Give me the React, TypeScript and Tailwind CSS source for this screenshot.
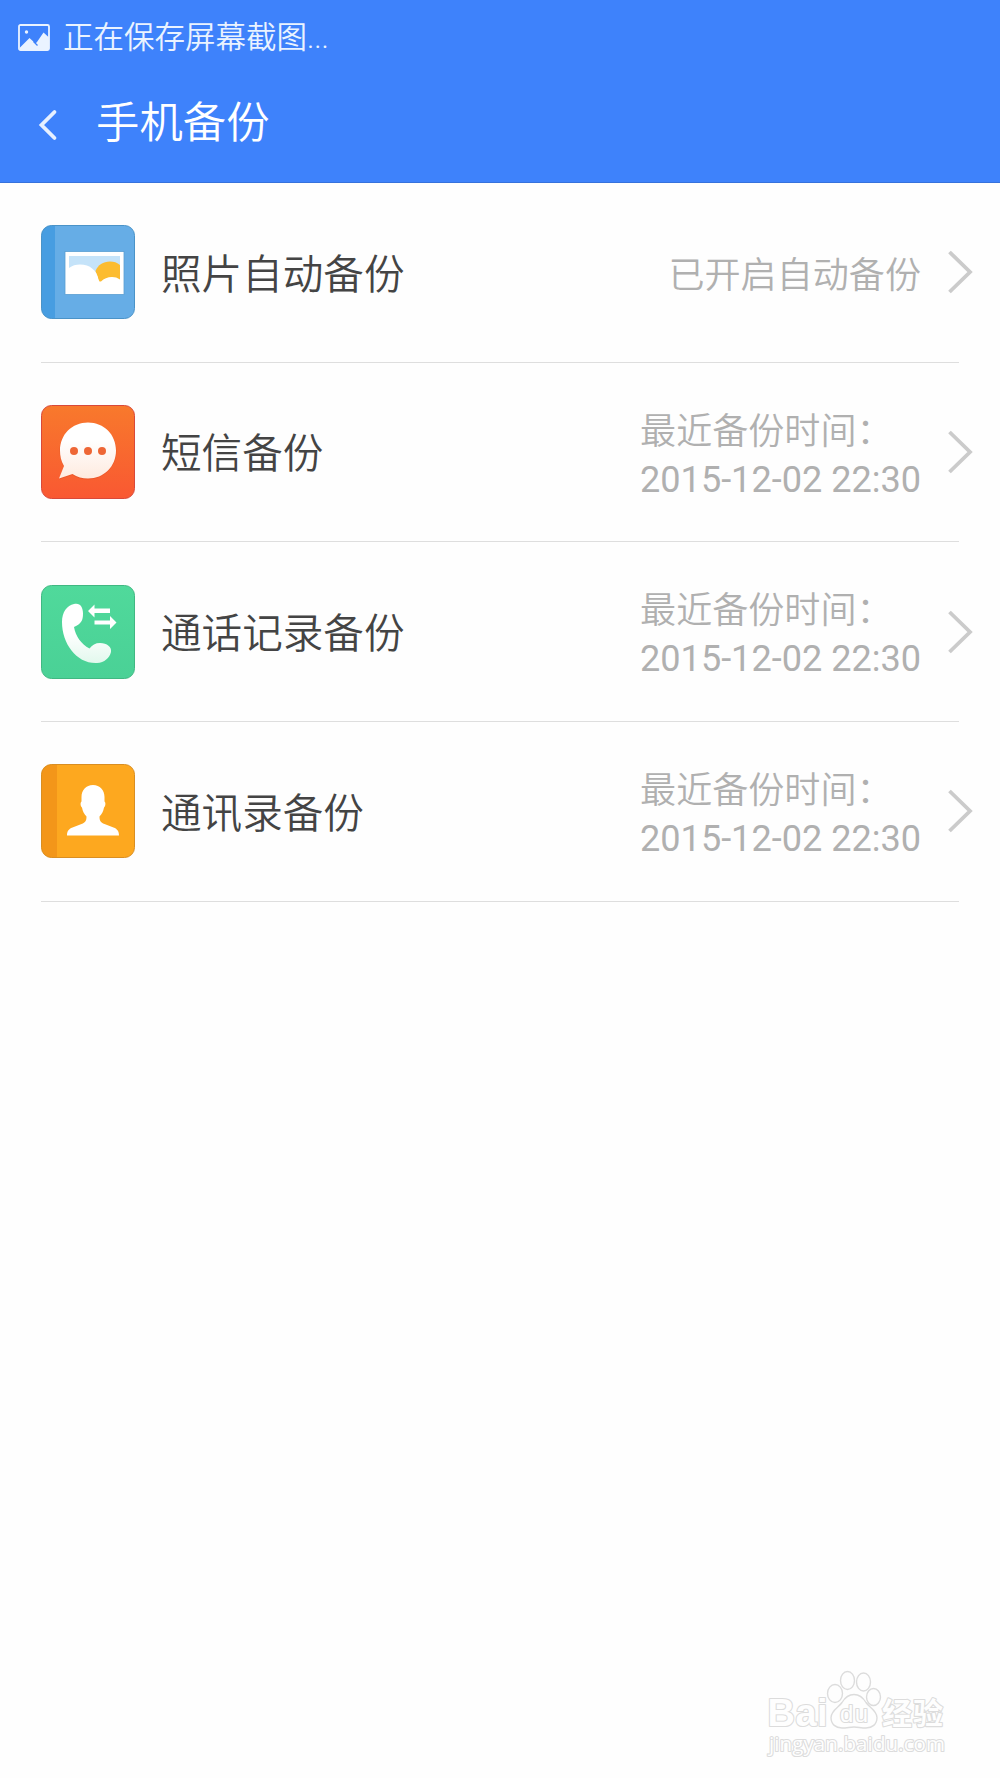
import type { ReactNode } from "react";

interface BackupItem {
  id: string;
  name: string;
  status: string;
  time?: string;
  icon: ReactNode;
}

/** 相册图标 */
function PhotoIcon() {
  return (
    <svg viewBox="0 0 94 94" className="size-[94px] shrink-0">
      <defs>
        <clipPath id="photo-clip">
          <rect x="0.5" y="0.5" width="93" height="93" rx="10" />
        </clipPath>
      </defs>
      <g clipPath="url(#photo-clip)">
        <rect width="94" height="94" fill="#66ade6" />
        <rect width="14" height="94" fill="#479de1" />
      </g>
      <rect x="0.5" y="0.5" width="93" height="93" rx="10" fill="none" stroke="#4a93c8" />
      <rect x="24" y="26.5" width="59" height="43" fill="#fff" stroke="#5a9ed2" strokeWidth="0.8" />
      <rect x="28" y="31" width="51" height="20" fill="#c5e3f9" />
      <path d="M54.500 46C57 40 62 36.500 69 36.500c4 0 7 1 10 3.500v17H58z" fill="#fcbc30" />
      <path d="M28 43c3-2.500 7-3.500 11-3.500 10 0 17 6 18.500 15l1 2h1.500c3-3 6.500-4.500 11-4.500 3 0 5.500.8 8 2.500v10H28z" fill="#fff" />
    </svg>
  );
}

/** 短信图标 */
function MessageIcon() {
  return (
    <svg viewBox="0 0 94 94" className="size-[94px] shrink-0">
      <defs>
        <linearGradient id="msg-bg" x1="0" y1="0" x2="0" y2="1">
          <stop offset="0" stopColor="#f8792c" />
          <stop offset="1" stopColor="#f95832" />
        </linearGradient>
        <linearGradient id="msg-bubble" x1="0" y1="0" x2="0" y2="1">
          <stop offset="0.3" stopColor="#fff" />
          <stop offset="1" stopColor="#feeadf" />
        </linearGradient>
      </defs>
      <rect x="0.5" y="0.5" width="93" height="93" rx="10" fill="url(#msg-bg)" stroke="#d8493a" />
      <path
        d="M47 18.500c16 0 28.500 12 28.500 27.500S63 74.500 47 74.500c-5.500 0-11-1.500-15.500-4.500L18 74.500l5-12.500c-3-5-4.500-10-4.500-16C18.500 30.500 31 18.500 47 18.500z"
        fill="#c43c18"
        opacity="0.25"
      />
      <path
        d="M47 17.500c16 0 28 12 28 28S63 73.500 47 73.500c-5.500 0-11-1.500-15.500-4.500L18 73.500l5-12.500c-3-5-4-10-4-15.500 0-16 12-28 28-28z"
        fill="url(#msg-bubble)"
      />
      <circle cx="33" cy="46" r="4" fill="#ee6635" />
      <circle cx="47" cy="46" r="4" fill="#ee6635" />
      <circle cx="61" cy="46" r="4" fill="#ee6635" />
    </svg>
  );
}

/** 通话记录图标 */
function CallIcon() {
  return (
    <svg viewBox="0 0 94 94" className="size-[94px] shrink-0">
      <defs>
        <linearGradient id="call-bg" x1="0" y1="0" x2="0" y2="1">
          <stop offset="0" stopColor="#50d99b" />
          <stop offset="1" stopColor="#4ad196" />
        </linearGradient>
        <linearGradient id="call-phone" x1="0" y1="0" x2="0" y2="1">
          <stop offset="0.5" stopColor="#fff" />
          <stop offset="1" stopColor="#e2f8ed" />
        </linearGradient>
      </defs>
      <rect x="0.5" y="0.5" width="93" height="93" rx="10" fill="url(#call-bg)" stroke="#40b882" />
      <path
        d="M33 19c6-1.500 9 3 9 9.500 0 7-1.500 10-9 13.500 1.500 9 7 17 15.500 21.500 2.500-3.500 6-5.500 10.500-5.500 7 0 12 4 11 9-1.500 6-6.500 10.500-14 11C36 79 21 59 21 37c0-10 5-16.500 12-18z"
        fill="url(#call-phone)"
      />
      <path d="M47 26l6.500-6.500v4H69v4.500H53.500v4.500zM53.500 35.500H69v-4.500L75.500 37.500 69 44v-4.500H53.500z" fill="#fff" />
    </svg>
  );
}

/** 通讯录图标 */
function ContactIcon() {
  return (
    <svg viewBox="0 0 94 94" className="size-[94px] shrink-0">
      <defs>
        <clipPath id="contact-clip">
          <rect x="0.5" y="0.5" width="93" height="93" rx="10" />
        </clipPath>
      </defs>
      <g clipPath="url(#contact-clip)">
        <rect width="94" height="94" fill="#fda81f" />
        <rect width="16" height="94" fill="#f39619" />
      </g>
      <rect x="0.5" y="0.5" width="93" height="93" rx="10" fill="none" stroke="#d98e22" />
      <path
        d="M52 21c7 0 11.500 5 11.500 12v4.500c1.500 1 1 5-.5 6-.7 4-2 6.500-4.500 9 0 4 1 6 5 7.500l9 3.500c4 1.500 5.500 4 5.500 8H26c0-4 1.500-6.500 5.500-8l9-3.500c4-1.500 5-3.500 5-7.500-2.500-2.500-3.800-5-4.500-9-1.500-1-2-5-.5-6V33c0-7 4.500-12 11.500-12z"
        fill="#fff"
      />
    </svg>
  );
}

const items: BackupItem[] = [
  { id: "photo", name: "照片自动备份", status: "已开启自动备份", icon: <PhotoIcon /> },
  { id: "sms", name: "短信备份", status: "最近备份时间：", time: "2015-12-02 22:30", icon: <MessageIcon /> },
  { id: "call", name: "通话记录备份", status: "最近备份时间：", time: "2015-12-02 22:30", icon: <CallIcon /> },
  { id: "contact", name: "通讯录备份", status: "最近备份时间：", time: "2015-12-02 22:30", icon: <ContactIcon /> },
];

function Header() {
  return (
    <header className="h-[183px] border-b border-[#3672dc] bg-[#3e82fb] text-white">
      <div className="flex h-[74px] items-center pl-[18px] text-[#eaf3ff]">
        <svg viewBox="0 0 32 27" className="h-[27px] w-8">
          <rect x="1" y="1" width="30" height="25" rx="1.500" fill="none" stroke="currentColor" strokeWidth="1.800" />
          <circle cx="8.500" cy="8" r="1.700" fill="currentColor" />
          <path d="M2 25V23.500L11.500 14l6 5.500 1.500-1.500L25.500 8.500 31 13.500v12z" fill="currentColor" />
          <path d="M15.500 17.500l4 4" stroke="#3e82fb" strokeWidth="1.300" />
        </svg>
        <span className="mt-0.5 ml-[13px] text-[30.5px] leading-none font-[350]">正在保存屏幕截图...</span>
      </div>
      <div className="flex h-[94px] items-center pl-[38px]">
        <svg viewBox="0 0 20 32" className="mt-2 h-8 w-5">
          <path d="M16.500 3L3.500 16l13 13" fill="none" stroke="#e6f0ff" strokeWidth="3.800" strokeLinecap="round" />
        </svg>
        <h1 className="mt-1.5 ml-[38px] text-[43.4px] leading-none font-[350]">手机备份</h1>
      </div>
    </header>
  );
}

function BackupRow({ item }: { item: BackupItem }) {
  return (
    <li className="mx-[41px] flex h-[179.7px] items-center border-b border-[#dedede]">
      {item.icon}
      <span className="mt-[5px] ml-[26px] text-[40.6px] leading-none font-[350] text-[#444]">{item.name}</span>
      <div className="mt-[7px] ml-auto text-[36.1px] leading-[48px] text-[#b0b0b0]">
        <div className="font-[350]">{item.status}</div>
        {item.time && <div>{item.time}</div>}
      </div>
      <svg viewBox="0 0 26 44" className="-mr-[14px] ml-[26px] h-11 w-[26px] shrink-0">
        <path d="M2.500 2L23 22 2.500 42" fill="none" stroke="#cbcbcb" strokeWidth="3.800" />
      </svg>
    </li>
  );
}

/** 右下角水印 */
function Watermark() {
  return (
    <svg
      viewBox="0 0 190 96"
      className="absolute right-[50px] bottom-[18px] h-24 w-[190px]"
      fill="#fefefe"
      stroke="#dcdcdc"
      strokeWidth="2.200"
      strokeLinejoin="round"
    >
      <g strokeWidth="1.400">
        <ellipse cx="75" cy="29.500" rx="7.500" ry="9" />
        <ellipse cx="87.500" cy="16.500" rx="7" ry="9" />
        <ellipse cx="103.500" cy="18" rx="7" ry="9" />
        <ellipse cx="113.500" cy="33" rx="7" ry="8.500" />
        <path d="M94 30.500c6 0 9 3 12 8 3 4.500 11 8 11 15 0 7-5 10.500-11 10.500-5 0-8-1-12-1s-7 1-12 1c-6 0-11-3.500-11-10.500 0-7 8-10.500 11-15 3-5 6-8 12-8z" />
      </g>
      <g className="[paint-order:stroke]">
        <text x="7.500" y="62" textLength="60" className="font-['Liberation_Sans',sans-serif] text-[38px] font-bold">
          Bai
        </text>
        <text x="80" y="58" textLength="28" className="font-['Liberation_Sans',sans-serif] text-[24px]">
          du
        </text>
        <text x="122" y="60" textLength="61" className="font-['Noto_Sans_CJK_SC',sans-serif] text-[30px] font-bold">
          经验
        </text>
        <text x="9" y="86.500" textLength="176" className="font-['Open_Sans',sans-serif] text-[20.5px]">
          jingyan.baidu.com
        </text>
      </g>
    </svg>
  );
}

export default function App() {
  return (
    <div className="relative h-[1778px] w-[1000px] overflow-hidden bg-[#fefefe] font-[Roboto,'Noto_Sans_CJK_SC',sans-serif]">
      <Header />
      <ul>
        {items.map((item) => (
          <BackupRow key={item.id} item={item} />
        ))}
      </ul>
      <Watermark />
    </div>
  );
}
